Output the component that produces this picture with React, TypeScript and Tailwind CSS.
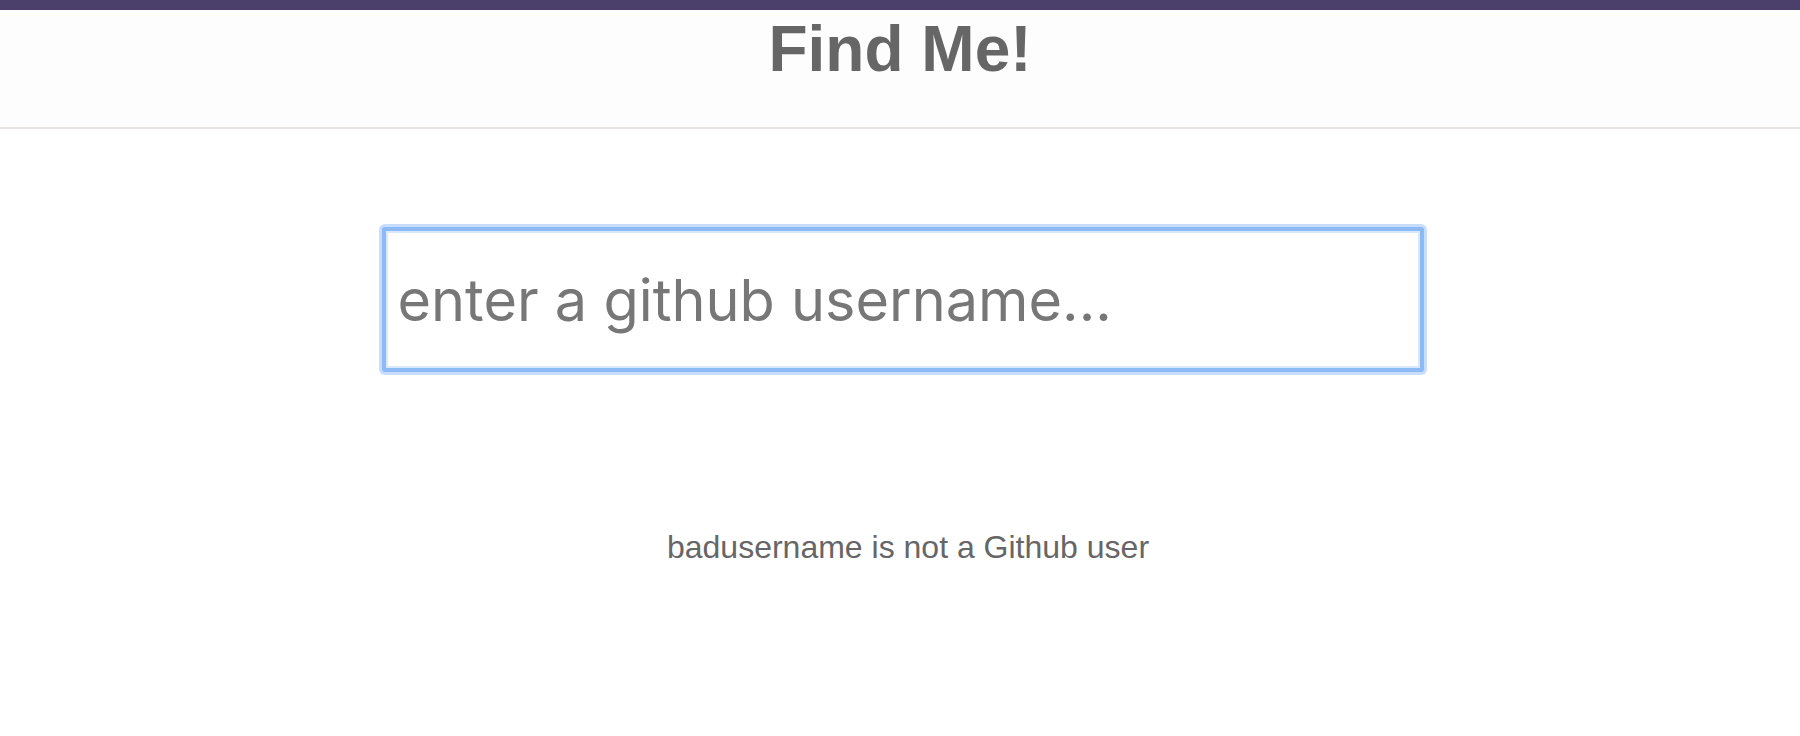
import React from "react";

export default function App() {
  return (
    <div className="min-h-[736px] bg-white" style={{ fontFamily: '"Liberation Sans", Arial, sans-serif' }}>
      <div className="h-[10px] bg-[#4b3f6b]" />
      <header className="h-[119px] bg-[#fdfdfd] border-b-2 border-[#e6e3e0] pt-[7px]">
        <h1 className="text-center text-[64px] font-bold leading-none text-[#666666]">Find Me!</h1>
      </header>
      <div className="pt-[98px] flex justify-center">
        <div className="ml-[5px] w-[1042px]">
          <input
            type="text"
            placeholder="enter a github username..."
            className="block w-full h-[145px] border-[4px] border-[#8cbaf7] rounded-[3px] bg-white px-[12px] text-[57.6px] text-[#555] placeholder:text-[#777777] outline-none shadow-[0_0_0_3px_#c7ddfb,inset_0_0_0_2px_#d9e8fc]"
            style={{ fontFamily: 'Inter, "Noto Sans", sans-serif' }}
          />
        </div>
      </div>
      <p className="mt-[159px] pl-[16px] text-center text-[32px] leading-none text-[#666666]">badusername is not a Github user</p>
    </div>
  );
}
